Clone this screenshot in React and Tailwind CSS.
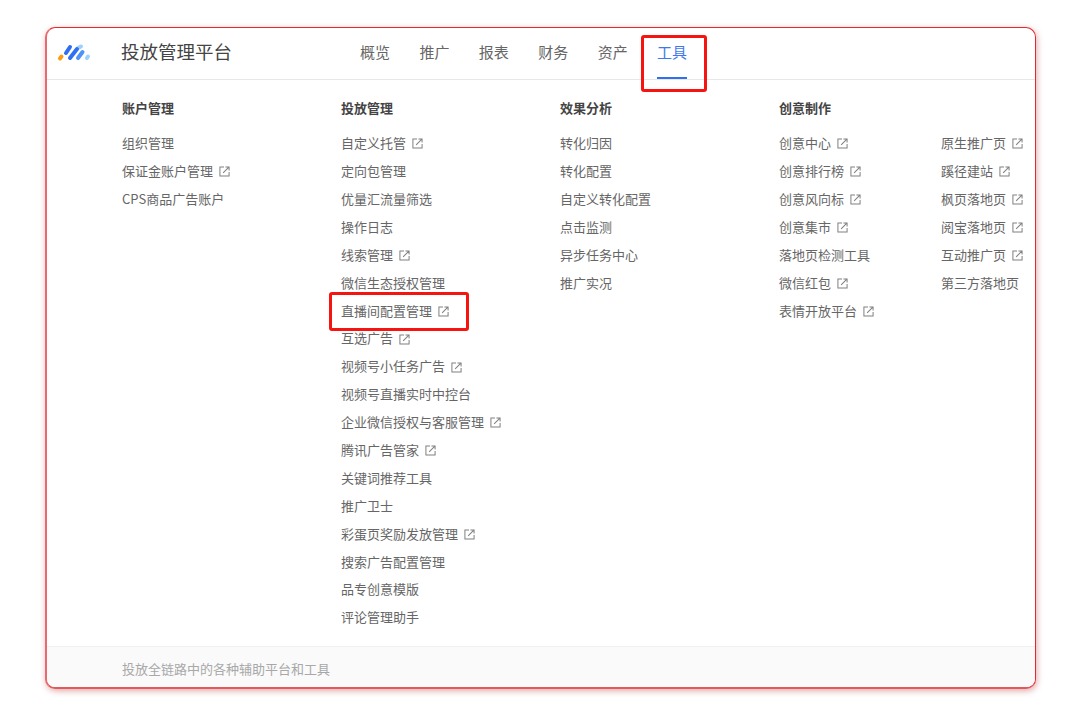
const nav = ['概览', '推广', '报表', '财务', '资产'];

const columns = [
  {
    title: '账户管理',
    width: 'w-[219px]',
    items: [['组织管理'], ['保证金账户管理', 1], ['CPS商品广告账户']],
  },
  {
    title: '投放管理',
    width: 'w-[219px]',
    items: [
      ['自定义托管', 1],
      ['定向包管理'],
      ['优量汇流量筛选'],
      ['操作日志'],
      ['线索管理', 1],
      ['微信生态授权管理'],
      ['直播间配置管理', 1],
      ['互选广告', 1],
      ['视频号小任务广告', 1],
      ['视频号直播实时中控台'],
      ['企业微信授权与客服管理', 1],
      ['腾讯广告管家', 1],
      ['关键词推荐工具'],
      ['推广卫士'],
      ['彩蛋页奖励发放管理', 1],
      ['搜索广告配置管理'],
      ['品专创意模版'],
      ['评论管理助手'],
    ],
  },
  {
    title: '效果分析',
    width: 'w-[219px]',
    items: [['转化归因'], ['转化配置'], ['自定义转化配置'], ['点击监测'], ['异步任务中心'], ['推广实况']],
  },
  {
    title: '创意制作',
    width: 'w-[162px]',
    items: [
      ['创意中心', 1],
      ['创意排行榜', 1],
      ['创意风向标', 1],
      ['创意集市', 1],
      ['落地页检测工具'],
      ['微信红包', 1],
      ['表情开放平台', 1],
    ],
  },
  {
    title: '',
    width: 'w-[90px]',
    items: [['原生推广页', 1], ['蹊径建站', 1], ['枫页落地页', 1], ['阅宝落地页', 1], ['互动推广页', 1], ['第三方落地页']],
  },
];

const Logo = () => (
  <svg width="34" height="20" viewBox="0 0 34 20" fill="none" strokeLinecap="round" strokeWidth="4">
    <line x1="3" y1="15.5" x2="4.5" y2="13.5" stroke="#fa9d0f" />
    <line x1="9" y1="10" x2="13" y2="4" stroke="#2f6ff0" />
    <line x1="21" y1="5" x2="24" y2="3.5" stroke="#9ad2fb" />
    <line x1="13" y1="15" x2="20" y2="6" stroke="#2f6ff0" />
    <line x1="21" y1="15" x2="25.5" y2="9" stroke="#4f93f7" />
    <line x1="30" y1="15" x2="31" y2="13.5" stroke="#9ad2fb" />
  </svg>
);

// box with an open top right corner and an arrow leaving through it
const LinkIcon = () => (
  <svg width="11" height="11" viewBox="0 0 12 12" fill="none" stroke="#808080" strokeWidth="1.1" className="ml-[6px] mt-[2px]">
    <path d="M5.5 1H1v10h10V6.5" />
    <path d="M4.5 7.5 10.5 1.5M7 1h4v4" />
  </svg>
);

const MenuColumn = ({ title, width, items }) => (
  <div className={width}>
    <h3 className="h-[18px] text-[13px] leading-[18px] font-bold text-[#444]">{title}</h3>
    <ul className="mt-[12px]">
      {items.map(([label, external]) => (
        <li key={label} className="flex h-[27.9px] items-center whitespace-nowrap text-[13px] text-[#666]">
          {label}
          {external && <LinkIcon />}
        </li>
      ))}
    </ul>
  </div>
);

export default function App() {
  return (
    <div className="h-[723px] w-[1080px] overflow-hidden bg-white pl-[45px] pt-[27px] font-['Noto_Sans_CJK_SC','Liberation_Sans',sans-serif]">
      <div className="relative flex h-[662px] w-[991px] flex-col overflow-hidden rounded-[10px] border border-b-2 border-l-2 border-[#e2292e] border-b-[#e4585c] border-l-[#e86a6e] bg-white shadow-[1px_2px_6px_rgba(180,40,40,0.4)]">
        <header className="flex h-[52px] items-center border-b border-[#e8e8e8]">
          <div className="ml-[10px] mt-[-1px]">
            <Logo />
          </div>
          <div className="ml-[30px] mt-[-3px] w-[239px] text-[18.5px] text-[#444]">投放管理平台</div>
          <nav className="flex h-full items-center gap-[29.4px] text-[15px] text-[#666]">
            {nav.map((name) => (
              <span key={name} className="mt-[-3px]">{name}</span>
            ))}
            <span className="relative flex h-full items-center pb-[3px] text-[#3f78ee]">
              工具
              <span className="absolute bottom-0 left-0 h-[2px] w-full bg-[#2f6ff0]" />
            </span>
          </nav>
        </header>

        <main className="flex flex-1 pl-[75px] pt-[19px]">
          {columns.map((col) => (
            <MenuColumn key={col.title || 'more'} {...col} />
          ))}
        </main>

        <footer className="flex h-[41px] items-center border-t border-[#f0f0f0] bg-[#fafafa] pl-[75px] pt-[3px] text-[13px] text-[#a8a8a8]">
          投放全链路中的各种辅助平台和工具
        </footer>

        {/* annotation boxes drawn over the screenshot */}
        <div className="absolute left-[594px] top-[7px] h-[57px] w-[66px] rounded-[3px] border-[3px] border-[#f5140f]" />
        <div className="absolute left-[282px] top-[264px] h-[39px] w-[140px] rounded-[3px] border-[3px] border-[#f5140f]" />
      </div>
    </div>
  );
}
